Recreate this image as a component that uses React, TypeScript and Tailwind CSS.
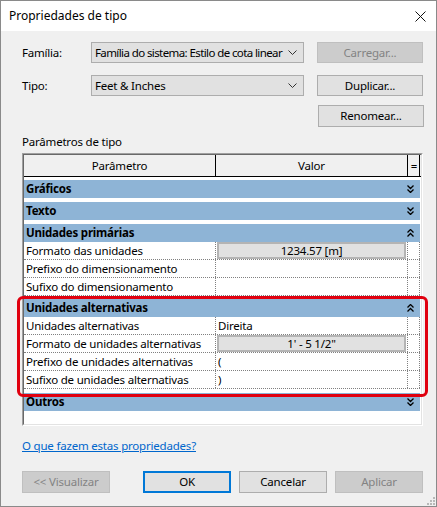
import React from "react";

const Chev = ({ up }: { up?: boolean }) => (
  <svg width="7" height="8" viewBox="0 0 7 8" className={up ? "rotate-180" : ""}>
    <path d="M0.5 0.5 L3.5 3.5 L6.5 0.5 M0.5 4.5 L3.5 7.5 L6.5 4.5" stroke="#000" strokeWidth="1.3" fill="none" />
  </svg>
);

const ComboChev = () => (
  <svg width="9" height="5" viewBox="0 0 9 5" className="shrink-0">
    <path d="M0.5 0.5 L4.5 4.5 L8.5 0.5" stroke="#333" strokeWidth="1" fill="none" />
  </svg>
);

const Group = ({ label, up, mt }: { label: string; up?: boolean; mt: string }) => (
  <div className={`${mt} h-[18px] w-[396px] bg-[#8eb4d6] flex items-center justify-between pl-[2px] pr-[6px]`}>
    <span className="font-bold leading-[18px]">{label}</span>
    <Chev up={up} />
  </div>
);

const Row = ({ label, value, boxed }: { label: string; value?: string; boxed?: boolean }) => (
  <div className="h-[18px] w-[396px] flex border-b border-dotted border-[#808080]">
    <div className="w-[192px] border-r border-dotted border-[#808080] pl-[2px] leading-[17px] whitespace-nowrap overflow-hidden">
      {label}
    </div>
    <div className="w-[192px] border-r border-dotted border-[#808080] leading-[17px]">
      {boxed ? (
        <div className="ml-[1px] w-[189px] h-[17px] border-2 border-[#b4b4b4] bg-[#e1e1e1] text-center leading-[13px]">
          {value}
        </div>
      ) : (
        <span className="pl-[2px]">{value}</span>
      )}
    </div>
    <div className="w-[12px] border-r border-dotted border-[#808080]" />
  </div>
);

export default function App() {
  return (
    <div className="w-[437px] h-[507px] border border-[#8a8a8a] bg-[#f0f0f0] relative font-['Noto_Sans',sans-serif] text-[11.5px] tracking-[-0.2px] text-black flex flex-col overflow-hidden">
      {/* title bar */}
      <div className="h-[30px] bg-white flex items-center justify-between pl-[8px] pr-[10px] shrink-0">
        <span className="text-[12px] tracking-[0px]">Propriedades de tipo</span>
        <svg width="11" height="11" viewBox="0 0 11 11">
          <path d="M0.5 0.5 L10.5 10.5 M10.5 0.5 L0.5 10.5" stroke="#111" strokeWidth="1" />
        </svg>
      </div>

      <div className="pl-[21px] pr-[12px] flex flex-col">
        {/* Família */}
        <div className="mt-[11px] flex items-center h-[21px]">
          <div className="w-[69px]">Família:</div>
          <div className="w-[213px] h-[21px] border border-[#adadad] bg-[#e1e1e1] flex items-center justify-between pl-[3px] pr-[6px] overflow-hidden">
            <span className="whitespace-nowrap tracking-[-0.6px]">Família do sistema: Estilo de cota linear</span>
            <ComboChev />
          </div>
          <div className="ml-[13px] w-[106px] h-[21px] border border-[#bfbfbf] bg-[#cccccc] text-[#838383] flex items-center justify-center">
            Carregar...
          </div>
        </div>
        {/* Tipo */}
        <div className="mt-[12px] flex items-center h-[21px]">
          <div className="w-[69px]">Tipo:</div>
          <div className="w-[213px] h-[21px] border border-[#adadad] bg-[#e1e1e1] flex items-center justify-between pl-[3px] pr-[6px]">
            <span className="whitespace-nowrap">Feet &amp; Inches</span>
            <ComboChev />
          </div>
          <div className="ml-[13px] w-[106px] h-[21px] border border-[#adadad] bg-[#e1e1e1] flex items-center justify-center">
            Duplicar...
          </div>
        </div>
        <div className="mt-[9px] flex justify-end">
          <div className="w-[106px] h-[22px] border border-[#adadad] bg-[#e1e1e1] flex items-center justify-center">
            Renomear...
          </div>
        </div>

        <div className="mt-[7px] leading-[16px]">Parâmetros de tipo</div>

        {/* table */}
        <div className="mt-[3px] w-[401px] h-[273px] border border-[#a0a0a0] border-r-white border-b-white">
          <div className="w-full h-full border border-[#696969] border-r-[#e3e3e3] border-b-[#e3e3e3] bg-white flex flex-col">
            <div className="h-[22px] w-[397px] flex bg-[#f0f0f0] border-b border-black shrink-0">
              <div className="w-[192px] border-r border-black text-center leading-[21px]">Parâmetro</div>
              <div className="w-[192px] border-r border-black text-center leading-[21px]">Valor</div>
              <div className="w-[12px] border-r border-black text-center leading-[21px] pl-[1px]">=</div>
            </div>
            <Group label="Gráficos" mt="mt-[3px]" />
            <Group label="Texto" mt="mt-[4px]" />
            <Group label="Unidades primárias" up mt="mt-[4px]" />
            <Row label="Formato das unidades" value="1234.57 [m]" boxed />
            <Row label="Prefixo do dimensionamento" />
            <Row label="Sufixo do dimensionamento" />
            <Group label="Unidades alternativas" up mt="mt-[3px]" />
            <Row label="Unidades alternativas" value="Direita" />
            <Row label="Formato de unidades alternativas" value={'1\' - 5 1/2"'} boxed />
            <Row label="Prefixo de unidades alternativas" value="(" />
            <Row label="Sufixo de unidades alternativas" value=")" />
            <Group label="Outros" mt="mt-[4px]" />
          </div>
        </div>

        <div className="mt-[12px] leading-[16px]">
          <span className="text-[#0066cc] underline">O que fazem estas propriedades?</span>
        </div>

        <div className="mt-[17px] flex">
          <div className="w-[88px] h-[22px] border border-[#bfbfbf] bg-[#cccccc] text-[#838383] flex items-center justify-center">
            &lt;&lt; Visualizar
          </div>
          <div className="ml-[33px] w-[88px] h-[22px] border-2 border-[#0078d7] bg-[#e1e1e1] flex items-center justify-center">
            OK
          </div>
          <div className="ml-[8px] w-[88px] h-[22px] border border-[#adadad] bg-[#e1e1e1] flex items-center justify-center">
            Cancelar
          </div>
          <div className="ml-[8px] w-[88px] h-[22px] border border-[#bfbfbf] bg-[#cccccc] text-[#838383] flex items-center justify-center">
            Aplicar
          </div>
        </div>
      </div>

      {/* red highlight */}
      <div className="absolute left-[16px] top-[295px] w-[411px] h-[101px] border-[3px] border-[#e0000f] rounded-[6px] pointer-events-none" />

      {/* resize grip */}
      <svg width="10" height="10" viewBox="0 0 10 10" className="absolute right-[1px] bottom-[1px]">
        <rect x="8" y="2" width="2" height="2" fill="#b8b8b8" />
        <rect x="5" y="5" width="2" height="2" fill="#b8b8b8" />
        <rect x="8" y="5" width="2" height="2" fill="#b8b8b8" />
        <rect x="2" y="8" width="2" height="2" fill="#b8b8b8" />
        <rect x="5" y="8" width="2" height="2" fill="#b8b8b8" />
        <rect x="8" y="8" width="2" height="2" fill="#b8b8b8" />
      </svg>
    </div>
  );
}
